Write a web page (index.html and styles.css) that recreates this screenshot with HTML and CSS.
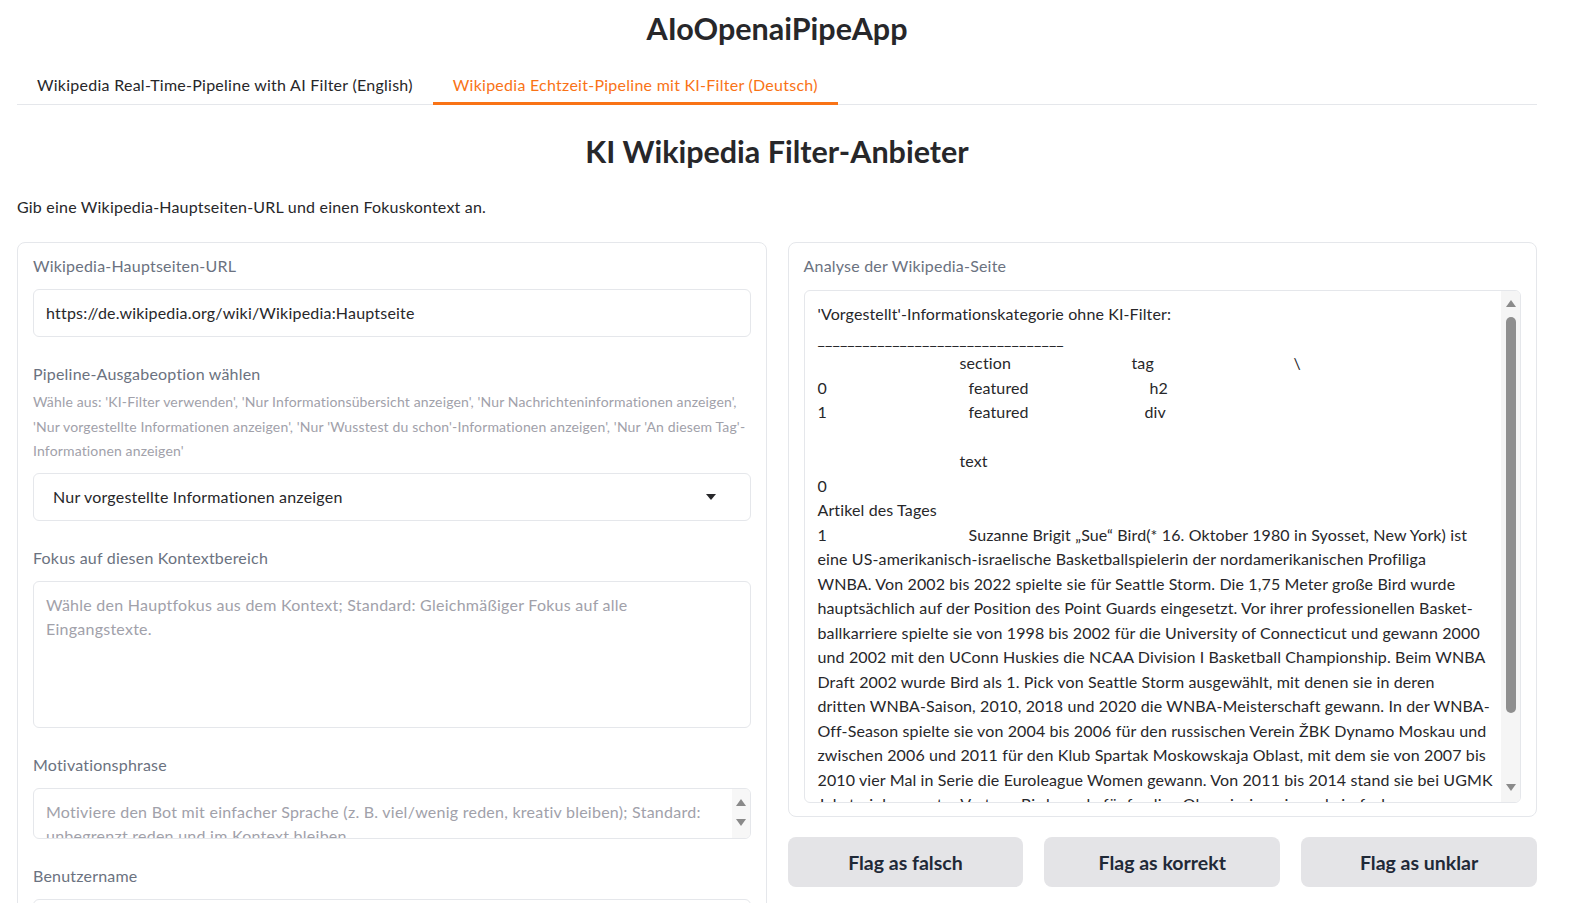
FILE: index.html
```html
<!DOCTYPE html>
<html lang="de">
<head>
<meta charset="utf-8">
<title>AIoOpenaiPipeApp</title>
<link rel="stylesheet" href="styles.css">
</head>
<body>
<div class="app">
  <h1 class="title">AIoOpenaiPipeApp</h1>
  <div class="tabs">
    <button class="tab">Wikipedia Real-Time-Pipeline with AI Filter (English)</button>
    <button class="tab active">Wikipedia Echtzeit-Pipeline mit KI-Filter (Deutsch)</button>
  </div>
  <h2 class="heading">KI Wikipedia Filter-Anbieter</h2>
  <p class="intro">Gib eine Wikipedia-Hauptseiten-URL und einen Fokuskontext an.</p>

  <div class="columns">
    <div class="col">
      <div class="panel">
        <div class="field">
          <div class="label">Wikipedia-Hauptseiten-URL</div>
          <div class="input">https://de.wikipedia.org/wiki/Wikipedia:Hauptseite</div>
        </div>
        <div class="field">
          <div class="label">Pipeline-Ausgabeoption wählen</div>
          <div class="info">Wähle aus: 'KI-Filter verwenden', 'Nur Informationsübersicht anzeigen', 'Nur Nachrichteninformationen anzeigen',<br>'Nur vorgestellte Informationen anzeigen', 'Nur 'Wusstest du schon'-Informationen anzeigen', 'Nur 'An diesem Tag'-<br>Informationen anzeigen'</div>
          <div class="input dropdown">
            <span class="dd-value">Nur vorgestellte Informationen anzeigen</span>
            <span class="dd-caret"></span>
          </div>
        </div>
        <div class="field">
          <div class="label">Fokus auf diesen Kontextbereich</div>
          <div class="textarea tall"><span class="placeholder">Wähle den Hauptfokus aus dem Kontext; Standard: Gleichmäßiger Fokus auf alle<br>Eingangstexte.</span></div>
        </div>
        <div class="field">
          <div class="label">Motivationsphrase</div>
          <div class="textarea short">
            <div class="ta-text placeholder">Motiviere den Bot mit einfacher Sprache (z. B. viel/wenig reden, kreativ bleiben); Standard:<br>unbegrenzt reden und im Kontext bleiben.</div>
            <div class="spin">
              <span class="arrow-up"></span>
              <span class="arrow-down"></span>
            </div>
          </div>
        </div>
        <div class="field">
          <div class="label">Benutzername</div>
          <div class="input"></div>
        </div>
      </div>
    </div>

    <div class="col">
      <div class="panel">
        <div class="field">
          <div class="label">Analyse der Wikipedia-Seite</div>
          <div class="output">
            <div class="output-text">
              <div class="line">'Vorgestellt'-Informationskategorie ohne KI-Filter:</div>
              <div class="line">_________________________________</div>
              <div class="line"><span class="c" style="width:142px"></span><span class="c" style="width:172px">section</span><span class="c" style="width:162px">tag</span>\</div>
              <div class="line"><span class="c" style="width:151px">0</span><span class="c" style="width:181px">featured</span>h2</div>
              <div class="line"><span class="c" style="width:151px">1</span><span class="c" style="width:176px">featured</span>div</div>
              <div class="line">&nbsp;</div>
              <div class="line"><span class="c" style="width:142px"></span>text</div>
              <div class="line">0</div>
              <div class="line">Artikel des Tages</div>
              <div class="line"><span class="c" style="width:151px">1</span>Suzanne Brigit „Sue“ Bird(* 16. Oktober 1980 in Syosset, New York) ist</div>
              <div class="line">eine US-amerikanisch-israelische Basketballspielerin der nordamerikanischen Profiliga</div>
              <div class="line">WNBA. Von 2002 bis 2022 spielte sie für Seattle Storm. Die 1,75 Meter große Bird wurde</div>
              <div class="line">hauptsächlich auf der Position des Point Guards eingesetzt. Vor ihrer professionellen Basket-</div>
              <div class="line">ballkarriere spielte sie von 1998 bis 2002 für die University of Connecticut und gewann 2000</div>
              <div class="line">und 2002 mit den UConn Huskies die NCAA Division I Basketball Championship. Beim WNBA</div>
              <div class="line">Draft 2002 wurde Bird als 1. Pick von Seattle Storm ausgewählt, mit denen sie in deren</div>
              <div class="line">dritten WNBA-Saison, 2010, 2018 und 2020 die WNBA-Meisterschaft gewann. In der WNBA-</div>
              <div class="line">Off-Season spielte sie von 2004 bis 2006 für den russischen Verein ŽBK Dynamo Moskau und</div>
              <div class="line">zwischen 2006 und 2011 für den Klub Spartak Moskowskaja Oblast, mit dem sie von 2007 bis</div>
              <div class="line">2010 vier Mal in Serie die Euroleague Women gewann. Von 2011 bis 2014 stand sie bei UGMK</div>
              <div class="line">Jekaterinburg unter Vertrag. Bird wurde fünfmalige Olympiasiegerin und vierfache</div>
            </div>
            <div class="vscroll">
              <span class="arrow-up"></span>
              <span class="thumb"></span>
              <span class="arrow-down"></span>
            </div>
          </div>
        </div>
      </div>
      <div class="buttons">
        <button class="btn">Flag as falsch</button>
        <button class="btn">Flag as korrekt</button>
        <button class="btn">Flag as unklar</button>
      </div>
    </div>
  </div>
</div>
</body>
</html>
```

FILE: styles.css
```css
* { box-sizing: border-box; }

html, body {
  margin: 0;
  padding: 0;
  background: #ffffff;
  overflow: hidden;
}

body {
  font-family: Lato, "Liberation Sans", sans-serif;
  color: #27272a;
  font-size: 16px;
  letter-spacing: 0.2px;
}

.app {
  width: 1520px;
  margin-left: 17px;
}

.title {
  margin: 0;
  height: 56px;
  line-height: 56px;
  text-align: center;
  font-size: 30.5px;
  font-weight: 700;
  letter-spacing: 0;
  color: #27272a;
}

.tabs {
  display: flex;
  margin-top: 9px;
  border-bottom: 1px solid #e5e7eb;
}

.tab {
  font-family: inherit;
  font-size: 16px;
  letter-spacing: 0.26px;
  color: #27272a;
  background: none;
  border: 0;
  border-bottom: 3px solid transparent;
  margin-bottom: -1px;
  height: 40px;
  padding: 3px 20px 0;
  line-height: 34px;
  cursor: pointer;
}

.tab.active {
  color: #f97316;
  border-bottom-color: #f97316;
}

.heading {
  margin: 26px 0 0;
  text-align: center;
  font-size: 30.5px;
  line-height: 40px;
  font-weight: 700;
  letter-spacing: 0;
  color: #27272a;
}

.intro {
  margin: 24px 0 0;
  font-size: 16px;
  line-height: 24px;
}

.columns {
  display: flex;
  gap: 21px;
  margin-top: 23px;
  align-items: flex-start;
}

.col {
  flex: 1;
  min-width: 0;
  display: flex;
  flex-direction: column;
  gap: 20px;
}

.panel {
  border: 1px solid #e5e7eb;
  border-radius: 8px;
  padding: 11px 15px 13px;
  display: flex;
  flex-direction: column;
}

.field {
  display: flex;
  flex-direction: column;
}

.field + .field {
  margin-top: 25.5px;
}

.label {
  font-size: 16px;
  line-height: 24px;
  color: #6b7280;
}

.info {
  margin-top: 4px;
  font-size: 14px;
  line-height: 24.5px;
  letter-spacing: 0.15px;
  white-space: nowrap;
  color: #a1a1aa;
}

.input, .textarea, .output {
  margin-top: 10.5px;
  border: 1px solid #e5e7eb;
  border-radius: 6px;
  background: #fff;
}

.info + .input {
  margin-top: 9px;
}

.input {
  height: 48px;
  padding: 0 12px;
  display: flex;
  align-items: center;
  font-size: 16px;
  color: #27272a;
}

.dropdown {
  padding-left: 19px;
  padding-right: 34px;
  justify-content: space-between;
}

.dd-caret {
  width: 0;
  height: 0;
  border-left: 5px solid transparent;
  border-right: 5px solid transparent;
  border-top: 6px solid #27272a;
}

.textarea {
  font-size: 16px;
  line-height: 24.5px;
  letter-spacing: 0.25px;
  overflow: hidden;
}

.textarea.tall {
  height: 147px;
  padding: 11px 12px;
}

.textarea.short {
  height: 51px;
  display: flex;
}

.ta-text {
  flex: 1;
  padding: 11px 12px 0;
}

.placeholder {
  color: #a1a1aa;
}

.spin {
  width: 18px;
  background: #f7f7f7;
  display: flex;
  flex-direction: column;
  align-items: center;
  justify-content: space-between;
  padding: 10px 0 12px;
}

.arrow-up {
  display: block;
  width: 0;
  height: 0;
  border-left: 5px solid transparent;
  border-right: 5px solid transparent;
  border-bottom: 7px solid #8a8a8a;
}

.arrow-down {
  display: block;
  width: 0;
  height: 0;
  border-left: 5px solid transparent;
  border-right: 5px solid transparent;
  border-top: 7px solid #8a8a8a;
}

.output {
  margin-top: 12px;
  height: 513px;
  display: flex;
  overflow: hidden;
}

.output-text {
  flex: 1;
  min-width: 0;
  padding: 11px 0 0 13px;
  font-size: 16px;
  line-height: 24.5px;
  letter-spacing: 0.12px;
  color: #27272a;
  white-space: nowrap;
  overflow: hidden;
}

.line {
  height: 24.5px;
}

.c {
  display: inline-block;
}

.vscroll {
  width: 19px;
  background: #f5f5f5;
  display: flex;
  flex-direction: column;
  align-items: center;
  padding: 9px 0 11px;
}

.thumb {
  display: block;
  width: 10px;
  height: 396px;
  margin-top: 10px;
  border-radius: 5px;
  background: #8f8f8f;
}

.vscroll .arrow-down {
  margin-top: auto;
}

.buttons {
  display: flex;
  gap: 21px;
}

.btn {
  flex: 1;
  height: 50px;
  border: 0;
  border-radius: 8px;
  background: #e4e4e7;
  font-family: inherit;
  font-size: 19.5px;
  font-weight: 700;
  letter-spacing: 0;
  color: #1f2937;
  cursor: pointer;
}
```
